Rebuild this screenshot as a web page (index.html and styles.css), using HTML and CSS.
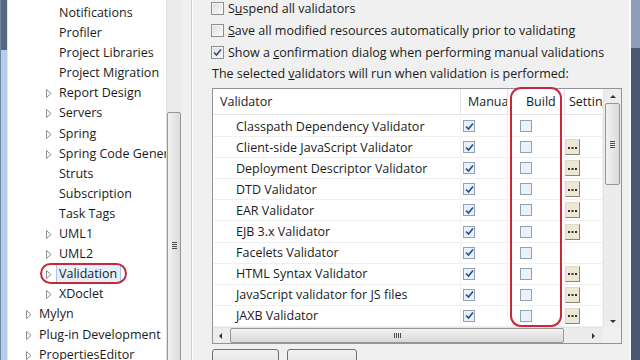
FILE: index.html
```html
<!DOCTYPE html>
<html lang="en">
<head>
    <meta charset="UTF-8">
    <title>Preferences - Validation</title>
    <link rel="stylesheet" href="styles.css">
</head>
<body>
    <div class="frame-left"></div>

    <div class="tree">
        <div class="node child">Notifications</div>
        <div class="node child">Profiler</div>
        <div class="node child">Project Libraries</div>
        <div class="node child">Project Migration</div>
        <div class="node child"><svg class="twisty" width="6" height="9"><polygon points="0.5,0.5 5,4.5 0.5,8.5"/></svg>Report Design</div>
        <div class="node child"><svg class="twisty" width="6" height="9"><polygon points="0.5,0.5 5,4.5 0.5,8.5"/></svg>Servers</div>
        <div class="node child"><svg class="twisty" width="6" height="9"><polygon points="0.5,0.5 5,4.5 0.5,8.5"/></svg>Spring</div>
        <div class="node child"><svg class="twisty" width="6" height="9"><polygon points="0.5,0.5 5,4.5 0.5,8.5"/></svg>Spring Code Generation</div>
        <div class="node child">Struts</div>
        <div class="node child">Subscription</div>
        <div class="node child">Task Tags</div>
        <div class="node child"><svg class="twisty" width="6" height="9"><polygon points="0.5,0.5 5,4.5 0.5,8.5"/></svg>UML1</div>
        <div class="node child"><svg class="twisty" width="6" height="9"><polygon points="0.5,0.5 5,4.5 0.5,8.5"/></svg>UML2</div>
        <div class="node child selected"><svg class="twisty" width="6" height="9"><polygon points="0.5,0.5 5,4.5 0.5,8.5"/></svg><span class="sel">Validation</span><span class="ring ring-tree"></span></div>
        <div class="node child"><svg class="twisty" width="6" height="9"><polygon points="0.5,0.5 5,4.5 0.5,8.5"/></svg>XDoclet</div>
        <div class="node"><svg class="twisty" width="6" height="9"><polygon points="0.5,0.5 5,4.5 0.5,8.5"/></svg>Mylyn</div>
        <div class="node"><svg class="twisty" width="6" height="9"><polygon points="0.5,0.5 5,4.5 0.5,8.5"/></svg>Plug-in Development</div>
        <div class="node"><svg class="twisty" width="6" height="9"><polygon points="0.5,0.5 5,4.5 0.5,8.5"/></svg>PropertiesEditor</div>
    </div>

    <div class="tree-scroll">
        <div class="vthumb tree-thumb"><span class="grip-v"></span></div>
    </div>
    <div class="gutter"></div>
    <div class="sash"></div>

    <div class="page">
        <label class="option"><span class="box"></span><span>S<u>u</u>spend all validators</span></label>
        <label class="option"><span class="box"></span><span><u>S</u>ave all modified resources automatically prior to validating</span></label>
        <label class="option"><span class="box"><svg width="11" height="11"><path d="M2 5.5 L4.5 8 L9 2.5"/></svg></span><span>Show a <u>c</u>onfirmation dialog when performing manual validations</span></label>
        <div class="caption">The selected <u>v</u>alidators will run when validation is performed:</div>

        <div class="table">
            <div class="table-top">
                <div class="grid">
                    <div class="head">
                        <div class="hcell c-name">Validator</div>
                        <div class="hcell c-manual">Manual</div>
                        <div class="hcell c-build">Build</div>
                        <div class="hcell c-set">Settings</div>
                    </div>
                    <div class="rows" id="rows"></div>
                </div>
                <div class="vscroll">
                    <span class="arrow up"></span>
                    <div class="vthumb table-thumb"><span class="grip-v"></span></div>
                    <span class="arrow down"></span>
                </div>
            </div>
            <div class="table-bottom">
                <div class="hscroll">
                    <span class="arrow left"></span>
                    <div class="hthumb"><span class="grip-h"></span></div>
                    <span class="arrow right"></span>
                </div>
                <div class="corner"></div>
            </div>
            <span class="ring ring-build"></span>
        </div>

        <div class="buttons">
            <span class="btn"></span>
            <span class="btn wide"></span>
        </div>
    </div>

    <div class="frame-right"></div>

    <script>
        const validators = [
            ["Classpath Dependency Validator", false],
            ["Client-side JavaScript Validator", true],
            ["Deployment Descriptor Validator", true],
            ["DTD Validator", true],
            ["EAR Validator", true],
            ["EJB 3.x Validator", true],
            ["Facelets Validator", false],
            ["HTML Syntax Validator", true],
            ["JavaScript validator for JS files", true],
            ["JAXB Validator", true]
        ];
        const check = '<svg width="11" height="11"><path d="M2 5.5 L4.5 8 L9 2.5"/></svg>';
        const dots = '<span class="dots"><svg width="9" height="3"><rect x="0" y="0" width="2" height="2"/><rect x="3.5" y="0" width="2" height="2"/><rect x="7" y="0" width="2" height="2"/></svg></span>';
        const rows = document.getElementById("rows");
        validators.forEach(function(v) {
            const row = document.createElement("div");
            row.className = "row";
            row.innerHTML =
                '<div class="cell c-name">' + v[0] + '</div>' +
                '<div class="cell c-manual"><span class="tbox">' + check + '</span></div>' +
                '<div class="cell c-build"><span class="tbox"></span></div>' +
                '<div class="cell c-set">' + (v[1] ? dots : '') + '</div>';
            rows.appendChild(row);
        });
    </script>
</body>
</html>
```

FILE: styles.css
```css
html, body {
    margin: 0;
    padding: 0;
}

body {
    display: flex;
    width: 640px;
    height: 360px;
    overflow: hidden;
    background: #f0f0f0;
    font-family: "Open Sans", "Noto Sans", sans-serif;
    font-size: 12.5px;
    color: #1b1b1b;
}

.frame-left {
    width: 8px;
    flex: none;
    background: linear-gradient(#56687f 0, #56687f 50px, #b6cde9 50px);
    border-left: 1px solid #7089a8;
    border-right: 1px solid #dbe6f2;
    box-sizing: border-box;
}

/* tree of preference pages */
.tree {
    width: 158px;
    flex: none;
    background: #fff;
    padding-top: 3px;
    overflow: hidden;
    white-space: nowrap;
}

.node {
    position: relative;
    height: 20.1px;
    line-height: 20px;
    padding-left: 31px;
}

.node.child {
    padding-left: 51px;
}

.twisty {
    position: absolute;
    margin-left: -13px;
    margin-top: 6px;
}

.twisty polygon {
    fill: #fff;
    stroke: #8e8e8e;
    stroke-width: 1;
}

.sel {
    display: inline-block;
    height: 18px;
    line-height: 18px;
    padding: 0 3px 0 2px;
    margin-left: -3px;
    background: #e6f0fb;
    border: 1px solid #a9c7ea;
    border-radius: 2px;
}

.ring {
    position: absolute;
    border: 2px solid #c8283a;
    box-sizing: border-box;
}

.ring-tree {
    left: 32px;
    top: -1px;
    width: 87px;
    height: 21px;
    border-radius: 11px;
}

.tree-scroll {
    width: 15px;
    flex: none;
    background: #ebebeb;
    border-left: 1px solid #e2e2e2;
    box-sizing: border-box;
    padding-top: 112px;
}

.vthumb {
    display: flex;
    align-items: center;
    justify-content: center;
    border: 1px solid #979797;
    border-radius: 2px;
    background: linear-gradient(90deg, #f2f2f2, #dadada);
    box-sizing: border-box;
}

.tree-thumb {
    height: 266px;
}

.grip-v {
    width: 5px;
    height: 7px;
    background: repeating-linear-gradient(#4d4d4d 0, #4d4d4d 1px, transparent 1px, transparent 2px);
}

.gutter {
    width: 10px;
    flex: none;
}

.sash {
    width: 2px;
    flex: none;
    border-left: 1px solid #d2d2d2;
    border-right: 1px solid #fff;
    box-sizing: border-box;
}

/* validation preference page */
.page {
    flex: 1;
    padding-left: 18px;
    display: flex;
    flex-direction: column;
    white-space: nowrap;
}

.option {
    display: flex;
    align-items: center;
    gap: 4px;
    height: 16px;
    margin-bottom: 6px;
}

.box {
    width: 13px;
    height: 13px;
    flex: none;
    box-sizing: border-box;
    border: 1px solid #8e8f8f;
    background: linear-gradient(135deg, #dcdcdc, #fbfbfb);
    box-shadow: inset 0 0 0 1px #f4f4f4;
    display: flex;
    align-items: center;
    justify-content: center;
}

.box svg path, .tbox svg path {
    fill: none;
    stroke: #2b4a86;
    stroke-width: 1.6;
}

.caption {
    height: 16px;
    line-height: 16px;
    padding-left: 1px;
}

.table {
    position: relative;
    width: 410px;
    height: 261px;
    margin-top: 6px;
    margin-left: 1px;
    border: 1px solid #8e949c;
    box-sizing: border-box;
    background: #fff;
    display: flex;
    flex-direction: column;
}

.table-top {
    display: flex;
    height: 238px;
}

.grid {
    width: 390px;
    overflow: hidden;
}

.head, .row {
    display: grid;
    grid-template-columns: 248px 47px 57px 38px;
}

.head {
    height: 25px;
    border-bottom: 1px solid #e5e5e5;
    margin-bottom: 1px;
}

.hcell {
    line-height: 22px;
    padding-top: 2px;
    padding-left: 7px;
    overflow: hidden;
    border-right: 1px solid #e3e3e3;
}

.hcell.c-build {
    padding-left: 18px;
}

.hcell.c-set {
    padding-left: 4px;
    border-right: none;
}

.row {
    height: 21.1px;
    border-bottom: 1px solid #f0f0f0;
    box-sizing: border-box;
}

.cell {
    display: flex;
    align-items: center;
    border-right: 1px solid #f3f3f3;
}

.cell.c-name {
    padding-left: 23px;
}

.cell.c-manual {
    padding-left: 2px;
}

.cell.c-build {
    padding-left: 12px;
}

.tbox {
    width: 12px;
    height: 12px;
    box-sizing: border-box;
    border: 1px solid #92a2b4;
    background: #e9f2fb;
    display: flex;
    align-items: center;
    justify-content: center;
}

.dots {
    width: 15px;
    height: 16px;
    box-sizing: border-box;
    background: #efe7d6;
    border: 1px solid #e2dac8;
    border-right-color: #8c8572;
    border-bottom-color: #8c8572;
    display: flex;
    align-items: center;
    justify-content: center;
    padding-top: 2px;
}

.dots rect {
    fill: #2f2f2f;
}

.vscroll {
    width: 18px;
    display: flex;
    flex-direction: column;
    align-items: center;
    background: #ececec;
    border-left: 1px solid #e4e4e4;
    box-sizing: border-box;
}

.table-thumb {
    width: 15px;
    height: 82px;
    margin-top: 5px;
}

.arrow {
    width: 0;
    height: 0;
    border: 3px solid transparent;
}

.arrow.up {
    border-bottom: 3px solid #333;
    border-top: none;
    margin-top: 6px;
}

.arrow.down {
    border-top: 3px solid #333;
    border-bottom: none;
    margin-top: auto;
    margin-bottom: 4px;
}

.arrow.left {
    border-right: 3px solid #333;
    border-left: none;
    margin-left: 6px;
}

.arrow.right {
    border-left: 3px solid #333;
    border-right: none;
    margin-left: auto;
    margin-right: 8px;
}

.table-bottom {
    display: flex;
    flex: 1;
}

.hscroll {
    width: 390px;
    display: flex;
    align-items: center;
    background: #ececec;
    border-top: 1px solid #e4e4e4;
    box-sizing: border-box;
}

.hthumb {
    width: 334px;
    height: 15px;
    margin-left: 8px;
    border: 1px solid #979797;
    border-radius: 2px;
    background: linear-gradient(#f3f3f3, #d8d8d8);
    box-sizing: border-box;
    display: flex;
    align-items: center;
    justify-content: center;
}

.grip-h {
    width: 7px;
    height: 5px;
    background: repeating-linear-gradient(90deg, #4d4d4d 0, #4d4d4d 1px, transparent 1px, transparent 2px);
}

.corner {
    flex: 1;
    background: #f0f0f0;
}

.ring-build {
    left: 297px;
    top: -2px;
    width: 52px;
    height: 240px;
    border-radius: 11px;
}

.buttons {
    display: flex;
    gap: 8px;
    margin-top: 5px;
    margin-left: 1px;
}

.btn {
    width: 67px;
    height: 24px;
    box-sizing: border-box;
    border: 1px solid #707070;
    border-radius: 3px;
    background: linear-gradient(#f2f2f2, #dddddd);
}

.btn.wide {
    width: 70px;
}

.frame-right {
    width: 11px;
    flex: none;
    box-sizing: border-box;
    border-left: 2px solid #f8f8f8;
    background: linear-gradient(#8b9fb9 0, #8b9fb9 48px, #4b5a70 48px);
}
```
